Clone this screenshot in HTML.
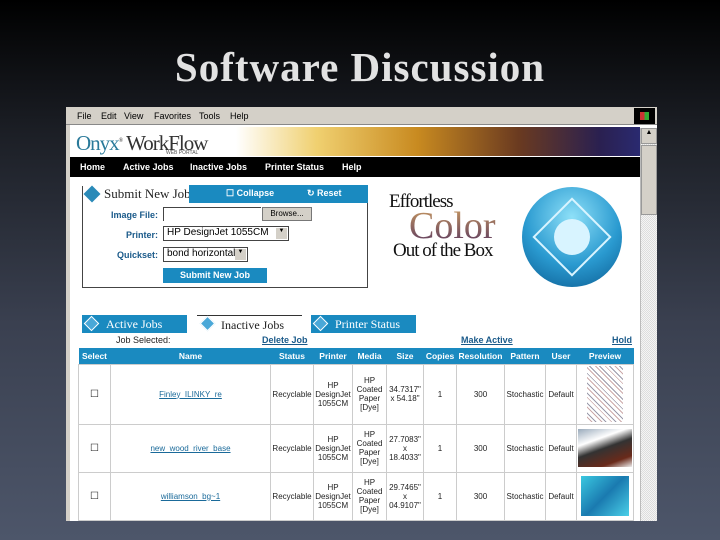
<!DOCTYPE html>
<html><head><style>
*{margin:0;padding:0;box-sizing:border-box}
body{width:720px;height:540px;overflow:hidden;background:linear-gradient(180deg,#000 0%,#1c1f26 25%,#3a4050 60%,#4d566a 100%);position:relative;font-family:"Liberation Sans",sans-serif}
.a{position:absolute}
h1{position:absolute;left:0;width:720px;top:43px;text-align:center;font:700 41px "Liberation Serif",serif;color:#e2e2e2;letter-spacing:1px}
.sh{left:66px;top:107px;width:591px;height:414px;background:#fff;overflow:hidden}
.menu{left:0;top:0;width:591px;height:18px;background:#d4d0c8;font-size:9px;color:#000;border-bottom:1px solid #888}
.menu span{position:absolute;top:4px}
.nav{left:4px;top:50px;width:570px;height:20px;background:#000;color:#fff;font-size:9px;font-weight:bold}
.nav span{position:absolute;top:5px}
.blue{background:#1a8ac0;color:#fff}
.lbl{font-size:9px;font-weight:bold;color:#1a5a8a;position:absolute;text-align:right;width:80px}
table{border-collapse:collapse;font-size:8px;color:#222}
td{border:1px solid #ccc;text-align:center;vertical-align:middle;padding:0 1px}
th{background:#1a8ac0;color:#fff;font-size:8.5px;height:16px;font-weight:bold}
a{color:#1a5a8a;text-decoration:underline;font-weight:bold}
.tab{position:absolute;top:208px;height:18px;font:12px "Liberation Serif",serif;padding-left:24px;line-height:18px;white-space:nowrap}
</style></head><body>
<h1>Software Discussion</h1>
<div class="a sh">
 <div class="a menu"><span style="left:11px">File</span><span style="left:35px">Edit</span><span style="left:58px">View</span><span style="left:88px">Favorites</span><span style="left:133px">Tools</span><span style="left:164px">Help</span>
  <div class="a" style="left:568px;top:1px;width:21px;height:16px;background:#000"><div class="a" style="left:6px;top:4px;width:9px;height:8px;background:linear-gradient(90deg,#c33 50%,#3a3 50%)"></div></div></div>
 <div class="a" style="left:0;top:18px;width:4px;height:396px;background:#d4d0c8"></div>
 <div class="a" style="left:170px;top:20px;width:404px;height:29px;background:linear-gradient(90deg,#fff 0%,#f0d070 20%,#c88a20 45%,#6a3a20 70%,#2a2050 90%,#2a2a70 100%)"></div>
 <div class="a" style="left:10px;top:24px;font:21px 'Liberation Serif',serif;color:#333;letter-spacing:-1px;white-space:nowrap"><span style="color:#2a7a9a">Onyx</span><sup style="font-size:6px">®</sup> WorkFlow</div>
 <div class="a" style="left:100px;top:43px;font-size:5px;color:#555">WEB PORTAL</div>
 <div class="a nav"><span style="left:10px">Home</span><span style="left:53px">Active Jobs</span><span style="left:120px">Inactive Jobs</span><span style="left:195px">Printer Status</span><span style="left:272px">Help</span></div>
 <div class="a" style="left:574px;top:21px;width:17px;height:393px;background:repeating-conic-gradient(#ddd 0 25%,#f4f4f4 0 50%) 0 0/2px 2px;border-left:1px solid #bbb"><div style="height:16px;background:#d4d0c8;border:1px solid #999;font-size:7px;text-align:center">▲</div><div style="margin-top:1px;height:70px;background:#d4d0c8;border:1px solid #999"></div></div>
 <div class="a" style="left:16px;top:79px;width:286px;height:102px;border:1px solid #444;border-top:none"></div>
 <div class="a" style="left:16px;top:77px;width:108px;height:19px;font:13px 'Liberation Serif',serif;padding-left:22px;line-height:19px;color:#222;white-space:nowrap">Submit New Job</div>
 <div class="a" style="left:20px;top:81px;width:12px;height:12px;background:#2a8ab8;transform:rotate(45deg)"></div>
 <div class="a blue" style="left:123px;top:78px;width:179px;height:18px;font-size:9px;font-weight:bold"><span class="a" style="left:37px;top:3px">☐ Collapse</span><span class="a" style="left:118px;top:3px">↻ Reset</span></div>
 <div class="lbl" style="left:12px;top:103px">Image File:</div>
 <div class="a" style="left:97px;top:100px;width:98px;height:14px;border:1px solid #444;border-right:none;border-bottom:none"></div>
 <div class="a" style="left:196px;top:100px;width:50px;height:14px;background:#d4d0c8;border:1px solid #777;font-size:8px;text-align:center;line-height:12px">Browse...</div>
 <div class="lbl" style="left:12px;top:123px">Printer:</div>
 <div class="a" style="left:97px;top:119px;width:126px;height:15px;border:1px solid #444;font-size:10px;padding-left:3px">HP DesignJet 1055CM<span class="a" style="right:1px;top:1px;width:11px;height:11px;background:#d4d0c8;font-size:6px;text-align:center">▼</span></div>
 <div class="lbl" style="left:12px;top:143px">Quickset:</div>
 <div class="a" style="left:97px;top:140px;width:85px;height:15px;border:1px solid #444;font-size:10px;padding-left:3px;overflow:hidden;white-space:nowrap">bond horizontal<span class="a" style="right:1px;top:1px;width:11px;height:11px;background:#d4d0c8;font-size:6px;text-align:center">▼</span></div>
 <div class="a blue" style="left:97px;top:161px;width:104px;height:15px;font-size:9px;font-weight:bold;text-align:center;line-height:15px">Submit New Job</div>
 <div class="a" style="left:323px;top:84px;font:19px 'Liberation Serif',serif;color:#111;letter-spacing:-1px">Effortless</div>
 <div class="a" style="left:343px;top:97px;font:38px 'Liberation Serif',serif;background:linear-gradient(#d0a060,#503060);-webkit-background-clip:text;color:transparent">Color</div>
 <div class="a" style="left:327px;top:133px;font:19px 'Liberation Serif',serif;color:#111;letter-spacing:-1px">Out of the Box</div>
 <div class="a" style="left:456px;top:80px;width:100px;height:100px;border-radius:50%;background:radial-gradient(circle at 50% 30%,#8ee0f8,#2a9ad0 55%,#0a5a90)"></div>
 <div class="a" style="left:478px;top:102px;width:56px;height:56px;border:2px solid #d8f4ff;transform:rotate(45deg)"></div>
 <div class="a" style="left:488px;top:112px;width:36px;height:36px;border-radius:50%;background:#d8f4ff"></div>
 <div class="tab blue" style="left:16px;width:105px">Active Jobs</div>
 <div class="tab" style="left:131px;width:105px;border-top:1px solid #333;color:#222">Inactive Jobs</div>
 <div class="tab blue" style="left:245px;width:105px">Printer Status</div>
 <div class="a" style="left:20px;top:211px;width:11px;height:11px;border:1px solid #fff;background:#4aa8d8;transform:rotate(45deg)"></div>
 <div class="a" style="left:136px;top:211px;width:11px;height:11px;border:1px solid #fff;background:#4aa8d8;transform:rotate(45deg)"></div>
 <div class="a" style="left:249px;top:211px;width:11px;height:11px;border:1px solid #fff;background:#4aa8d8;transform:rotate(45deg)"></div>
 <div class="a" style="top:228px;left:50px;font-size:9px;color:#222">Job Selected:</div>
 <div class="a" style="top:228px;left:196px;font-size:9px"><a>Delete Job</a></div>
 <div class="a" style="top:228px;left:395px;font-size:9px"><a>Make Active</a></div>
 <div class="a" style="top:228px;left:546px;font-size:9px"><a>Hold</a></div>
 <table class="a" style="left:12px;top:241px;width:556px">
  <tr><th style="width:32px">Select</th><th style="width:160px">Name</th><th style="width:43px">Status</th><th style="width:39px">Printer</th><th style="width:34px">Media</th><th style="width:37px">Size</th><th style="width:33px">Copies</th><th style="width:48px">Resolution</th><th style="width:41px">Pattern</th><th style="width:31px">User</th><th>Preview</th></tr>
  <tr style="height:60px"><td style="font-size:10px">☐</td><td><a style="font-weight:normal;color:#1a6a9a">Finley_ILINKY_re</a></td><td>Recyclable</td><td>HP<br>DesignJet<br>1055CM</td><td>HP<br>Coated<br>Paper<br>[Dye]</td><td>34.7317"<br>x 54.18"</td><td>1</td><td>300</td><td>Stochastic</td><td>Default</td><td><div style="width:36px;height:56px;margin:auto;background:repeating-linear-gradient(45deg,#fff 0 3px,#caa 3px 4px,#fff 4px 6px,#99a 6px 7px)"></div></td></tr>
  <tr style="height:48px"><td style="font-size:10px">☐</td><td><a style="font-weight:normal;color:#1a6a9a">new_wood_river_base</a></td><td>Recyclable</td><td>HP<br>DesignJet<br>1055CM</td><td>HP<br>Coated<br>Paper<br>[Dye]</td><td>27.7083"<br>x<br>18.4033"</td><td>1</td><td>300</td><td>Stochastic</td><td>Default</td><td><div style="width:54px;height:38px;margin:auto;background:linear-gradient(160deg,#9ab 0%,#fff 30%,#333 50%,#6a2a1a 80%,#eee 100%)"></div></td></tr>
  <tr style="height:48px"><td style="font-size:10px">☐</td><td><a style="font-weight:normal;color:#1a6a9a">williamson_bg~1</a></td><td>Recyclable</td><td>HP<br>DesignJet<br>1055CM</td><td>HP<br>Coated<br>Paper<br>[Dye]</td><td>29.7465" x<br>04.9107"</td><td>1</td><td>300</td><td>Stochastic</td><td>Default</td><td><div style="width:48px;height:40px;margin:auto;background:linear-gradient(135deg,#3ac8e0,#1a7ab0 50%,#4ad0e8)"></div></td></tr>
 </table>
</div>
</body></html>
